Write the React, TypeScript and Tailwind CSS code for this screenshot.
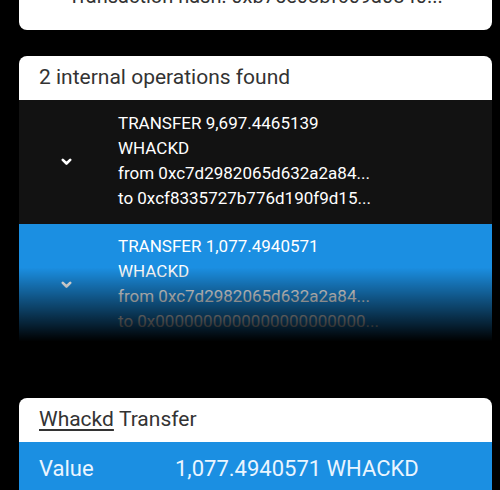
import React from 'react';

const Chevron: React.FC = () => (
  <svg width="11" height="8" viewBox="0 0 11 8" fill="none">
    <path d="M1.8 1.8 L5.5 5.5 L9.2 1.8" stroke="currentColor" strokeWidth="2.6" strokeLinecap="round" strokeLinejoin="round" />
  </svg>
);

type Op = {
  amount: string;
  from: string;
  to: string;
};

const OpRow: React.FC<{ op: Op; active?: boolean }> = ({ op, active }) => (
  <div
    className={`relative flex items-center ${active ? 'h-[121px] bg-[#1b8fe2]' : 'h-[124px] bg-[#121212]'} text-white`}
  >
    <div className="w-[99px] pl-[42px] text-white">
      <Chevron />
    </div>
    <div className="flex flex-col pb-[2px] text-[17px] leading-[25px]">
      <span>TRANSFER {op.amount}</span>
      <span>WHACKD</span>
      <span>from {op.from}</span>
      <span>to {op.to}</span>
    </div>
    {active && (
      <div className="pointer-events-none absolute inset-0 bg-gradient-to-b from-transparent from-[36%] to-black to-[97%]" />
    )}
  </div>
);

const ops: Op[] = [
  { amount: '9,697.4465139', from: '0xc7d2982065d632a2a84...', to: '0xcf8335727b776d190f9d15...' },
  { amount: '1,077.4940571', from: '0xc7d2982065d632a2a84...', to: '0x0000000000000000000000...' },
];

export default function App() {
  return (
    <div className="h-[490px] w-[500px] overflow-hidden bg-black font-['Roboto',sans-serif]">
      <div className="ml-[19px] w-[473px]">
        <div className="-mt-[19px] h-[49px] rounded-b-[8px] bg-white pt-[3px] text-center text-[20px] leading-[24px] text-[#333]">
          Transaction hash: 0xb75e08bf609a0840...
        </div>

        <div className="mt-[26px] overflow-hidden rounded-t-[8px]">
          <div className="flex h-[44px] items-center bg-white pl-[20px] text-[21px] text-[#333]">
            2 internal operations found
          </div>
          <OpRow op={ops[0]} />
          <OpRow op={ops[1]} active />
        </div>

        <div className="mt-[53px] overflow-hidden rounded-t-[8px]">
          <div className="flex h-[44px] items-center bg-white pl-[20px] text-[21px] text-[#333]">
            <span className="underline decoration-[1.5px] underline-offset-[3px]">Whackd</span>
            <span className="ml-[5px]">Transfer</span>
          </div>
          <div className="flex h-[52px] items-center bg-[#1b8fe2] pl-[20px] text-[22px] text-[#eaf5ff]">
            <span className="w-[136px]">Value</span>
            <span>1,077.4940571 WHACKD</span>
          </div>
        </div>
      </div>
    </div>
  );
}
